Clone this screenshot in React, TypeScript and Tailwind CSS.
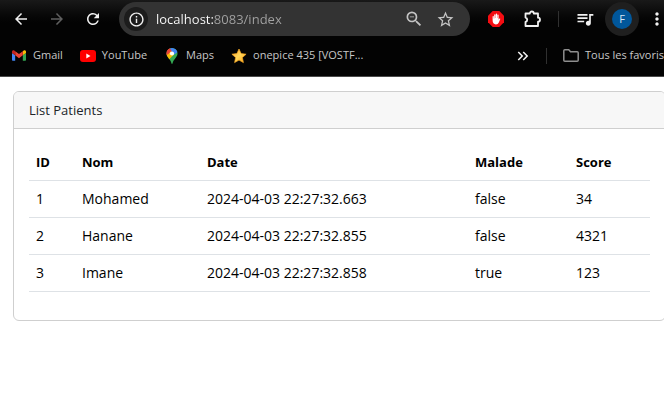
import type { ReactNode } from "react";
import {
  MdArrowBack,
  MdArrowForward,
  MdInfoOutline,
  MdKeyboardDoubleArrowRight,
  MdMoreVert,
  MdQueueMusic,
  MdRefresh,
  MdStarBorder,
  MdZoomOut,
} from "react-icons/md";

const patients = [
  { id: 1, nom: "Mohamed", date: "2024-04-03 22:27:32.663", malade: "false", score: 34 },
  { id: 2, nom: "Hanane", date: "2024-04-03 22:27:32.855", malade: "false", score: 4321 },
  { id: 3, nom: "Imane", date: "2024-04-03 22:27:32.858", malade: "true", score: 123 },
];

function ToolButton({ label, children }: { label: string; children: ReactNode }) {
  return (
    <button type="button" aria-label={label} className="flex size-9 shrink-0 items-center justify-center">
      {children}
    </button>
  );
}

function AdBlockIcon() {
  return (
    <svg viewBox="0 0 16 16" className="size-4">
      <path d="M4.7 0h6.6L16 4.7v6.6L11.3 16H4.7L0 11.3V4.7z" fill="#f40d12" />
      <path
        d="M4.600 9V5.600a.6.6 0 0 1 1.200 0V7.500h.4V3.900a.65.65 0 0 1 1.300 0V7h.3V3.200a.65.65 0 0 1 1.300 0V7h.3V4.200a.6.6 0 0 1 1.200 0v4.600l.6-1c.5-.7 1.300-.2 1 .5l-1.400 3.200c-.6 1.300-1.500 1.900-2.900 1.900-2.200 0-3.300-1.500-3.300-4.400z"
        fill="#fff"
      />
    </svg>
  );
}

function PuzzleIcon() {
  return (
    <svg viewBox="0 0 18 18" className="size-[18px]" fill="none" stroke="#f1f1f1" strokeWidth="1.8" strokeLinejoin="round">
      <path d="M2.500 3.500h4.300a2 2 0 0 1 4 0H15v4.200a2 2 0 0 1 0 4V16H2.500v-4.100a2.200 2.200 0 0 0 0-4.300z" />
    </svg>
  );
}

function GmailIcon() {
  return (
    <svg viewBox="52 42 88 66" className="h-[11px] w-[14px]">
      <path fill="#4285f4" d="M58 108h14V74L52 59v43c0 3.320 2.690 6 6 6" />
      <path fill="#34a853" d="M120 108h14c3.320 0 6-2.690 6-6V59l-20 15" />
      <path fill="#fbbc04" d="M120 48v26l20-15v-8c0-7.420-8.470-11.650-14.400-7.200" />
      <path fill="#ea4335" d="M72 74V48l24 18 24-18v26L96 92" />
      <path fill="#c5221f" d="M52 51v8l20 15V48l-5.600-4.200c-5.940-4.450-14.400-.22-14.400 7.200" />
    </svg>
  );
}

function YouTubeIcon() {
  return (
    <svg viewBox="0 0 16 12" className="h-3 w-4">
      <rect width="16" height="12" rx="3" fill="#f00" />
      <path d="M6.300 3.600v4.800L10.500 6z" fill="#fff" />
    </svg>
  );
}

function MapsIcon() {
  return (
    <svg viewBox="0 0 12 16" className="h-4 w-3">
      <defs>
        <clipPath id="pin">
          <path d="M6 0a5.500 5.500 0 0 0-5.500 5.500c0 2 1 3.300 2.300 4.900C4.200 12.100 5 13.300 5.400 15.200c.2 1 1 1 1.200 0 .4-1.900 1.200-3.100 2.600-4.800 1.300-1.600 2.300-2.900 2.300-4.900A5.500 5.500 0 0 0 6 0z" />
        </clipPath>
      </defs>
      <g clipPath="url(#pin)">
        <path d="M0 0h12v16H0z" fill="#34a853" />
        <path d="M3.500 0H12v4L7.500 7 4 4z" fill="#4285f4" />
        <path d="M0 0h3.500L6 3.500 3 6.500 0 7z" fill="#ea4335" />
        <path d="M0 7.500L4.500 3 8 6.500 2.500 12z" fill="#fbbc04" />
        <path d="M0 0h4L5 3 2.500 6 0 7z" fill="#ea4335" />
      </g>
      <circle cx="6" cy="5.500" r="2.100" fill="#fff" />
    </svg>
  );
}

function StarIcon() {
  return (
    <svg viewBox="0 0 16 16" className="size-4">
      <defs>
        <linearGradient id="gold" x1="0" y1="0" x2="1" y2="1">
          <stop offset="0" stopColor="#ffa030" />
          <stop offset=".5" stopColor="#ffd75a" />
          <stop offset="1" stopColor="#ff9d12" />
        </linearGradient>
      </defs>
      <path
        d="M8 1l2.100 4.600 5 .6-3.700 3.400 1 5L8 12.100l-4.400 2.500 1-5L.9 6.200l5-.6z"
        fill="url(#gold)"
        stroke="#f5a623"
        strokeWidth=".7"
        strokeLinejoin="round"
      />
    </svg>
  );
}

function FolderIcon() {
  return (
    <svg viewBox="0 0 16 13" className="h-[13px] w-4" fill="none" stroke="#8f8f8f" strokeWidth="1.500" strokeLinejoin="round">
      <path d="M.8 11.200V1.800q0-1 1-1h4l1.700 1.900h6.700q1 0 1 1v7.500q0 1-1 1H1.800q-1 0-1-1z" />
    </svg>
  );
}

function Bookmark({ icon, label }: { icon: ReactNode; label: string }) {
  return (
    <a href="#" className="flex shrink-0 items-center gap-1.5 whitespace-nowrap">
      <span className="flex w-4 justify-center">{icon}</span>
      {label}
    </a>
  );
}

function BrowserChrome() {
  return (
    <header className="overflow-hidden border-b border-[#4a4a4a] bg-[#030303] text-[#f1f1f1]">
      <div className="-mr-[11px] flex h-[38px] items-center bg-linear-to-b from-[#191919] to-[#030303] to-60% pl-[3px]">
        <ToolButton label="Retour">
          <MdArrowBack size={18} />
        </ToolButton>
        <ToolButton label="Avancer">
          <MdArrowForward size={18} color="#5f5f5f" />
        </ToolButton>
        <ToolButton label="Actualiser">
          <MdRefresh size={18} />
        </ToolButton>
        <div className="mr-2 ml-2 flex h-[34px] min-w-0 flex-1 items-center rounded-full bg-[#333333] pr-[15px] pl-[5px]">
          <button
            type="button"
            aria-label="Informations sur le site"
            className="flex size-6 shrink-0 items-center justify-center rounded-full bg-[#1c1c1c]"
          >
            <MdInfoOutline size={17} />
          </button>
          <input
            type="text"
            aria-label="Adresse"
            defaultValue="localhost:8083/index"
            className="ml-2 min-w-0 flex-1 bg-[linear-gradient(90deg,#ffffff_57px,#a3a3a3_57px)] bg-clip-text text-[13px] leading-5 text-transparent outline-none"
          />
          <button type="button" aria-label="Zoom" className="mr-3 shrink-0">
            <MdZoomOut size={20} color="#c4c4c4" />
          </button>
          <button type="button" aria-label="Ajouter aux favoris" className="shrink-0">
            <MdStarBorder size={19} color="#c4c4c4" />
          </button>
        </div>
        <ToolButton label="AdBlock">
          <AdBlockIcon />
        </ToolButton>
        <ToolButton label="Extensions">
          <PuzzleIcon />
        </ToolButton>
        <div className="mx-2 h-4 w-px shrink-0 bg-[#303030]" />
        <ToolButton label="Contenus multimédias">
          <MdQueueMusic size={20} />
        </ToolButton>
        <button
          type="button"
          aria-label="Profil"
          className="ml-0.5 flex size-[34px] shrink-0 items-center justify-center rounded-full bg-[#1f1f1f]"
        >
          <span className="flex size-5 items-center justify-center rounded-full bg-[#01579b] text-[11px] text-[#d5e6f5]">F</span>
        </button>
        <ToolButton label="Menu">
          <MdMoreVert size={20} />
        </ToolButton>
      </div>
      <nav className="flex h-[38px] items-center overflow-hidden pb-[3px] pl-[11px] text-[11px] text-[#c7c7c7]">
        <div className="flex items-center gap-[17px]">
          <Bookmark icon={<GmailIcon />} label="Gmail" />
          <Bookmark icon={<YouTubeIcon />} label="YouTube" />
          <Bookmark icon={<MapsIcon />} label="Maps" />
          <Bookmark icon={<StarIcon />} label="onepice 435 [VOSTF..." />
        </div>
        <button type="button" aria-label="Autres favoris" className="ml-auto shrink-0">
          <MdKeyboardDoubleArrowRight size={18} color="#f1f1f1" />
        </button>
        <div className="mr-4 ml-[14px] h-4 w-px shrink-0 bg-[#303030]" />
        <Bookmark icon={<FolderIcon />} label="Tous les favoris" />
      </nav>
    </header>
  );
}

export default function App() {
  return (
    <div className="min-h-screen overflow-hidden bg-white font-['Open_Sans','Noto_Sans',sans-serif]">
      <BrowserChrome />
      <main className="-mr-0.5 pt-[14px] pl-[13px] text-black">
        <section className="rounded-[6px] border border-[#cfcfcf]">
          <h1 className="rounded-t-[5px] border-b border-[#cfcfcf] bg-[#f7f7f7] px-[15px] py-2 text-[13px] leading-5 text-[#212529]">
            List Patients
          </h1>
          <div className="px-[15px] pt-[15px] pb-7">
            <table className="w-full table-fixed border-collapse text-left text-sm leading-5">
              <thead>
                <tr className="border-b border-[#dee2e6] text-[13px] leading-5">
                  <th className="w-[46px] px-[7px] py-2">ID</th>
                  <th className="w-[125px] px-[7px] py-2">Nom</th>
                  <th className="w-[268px] px-[7px] py-2">Date</th>
                  <th className="w-[101px] px-[7px] py-2">Malade</th>
                  <th className="w-[81px] px-[7px] py-2">Score</th>
                </tr>
              </thead>
              <tbody>
                {patients.map((p) => (
                  <tr key={p.id} className="border-b border-[#dee2e6]">
                    <td className="px-[7px] py-2">{p.id}</td>
                    <td className="px-[7px] py-2">{p.nom}</td>
                    <td className="px-[7px] py-2">{p.date}</td>
                    <td className="px-[7px] py-2">{p.malade}</td>
                    <td className="px-[7px] py-2">{p.score}</td>
                  </tr>
                ))}
              </tbody>
            </table>
          </div>
        </section>
      </main>
    </div>
  );
}
